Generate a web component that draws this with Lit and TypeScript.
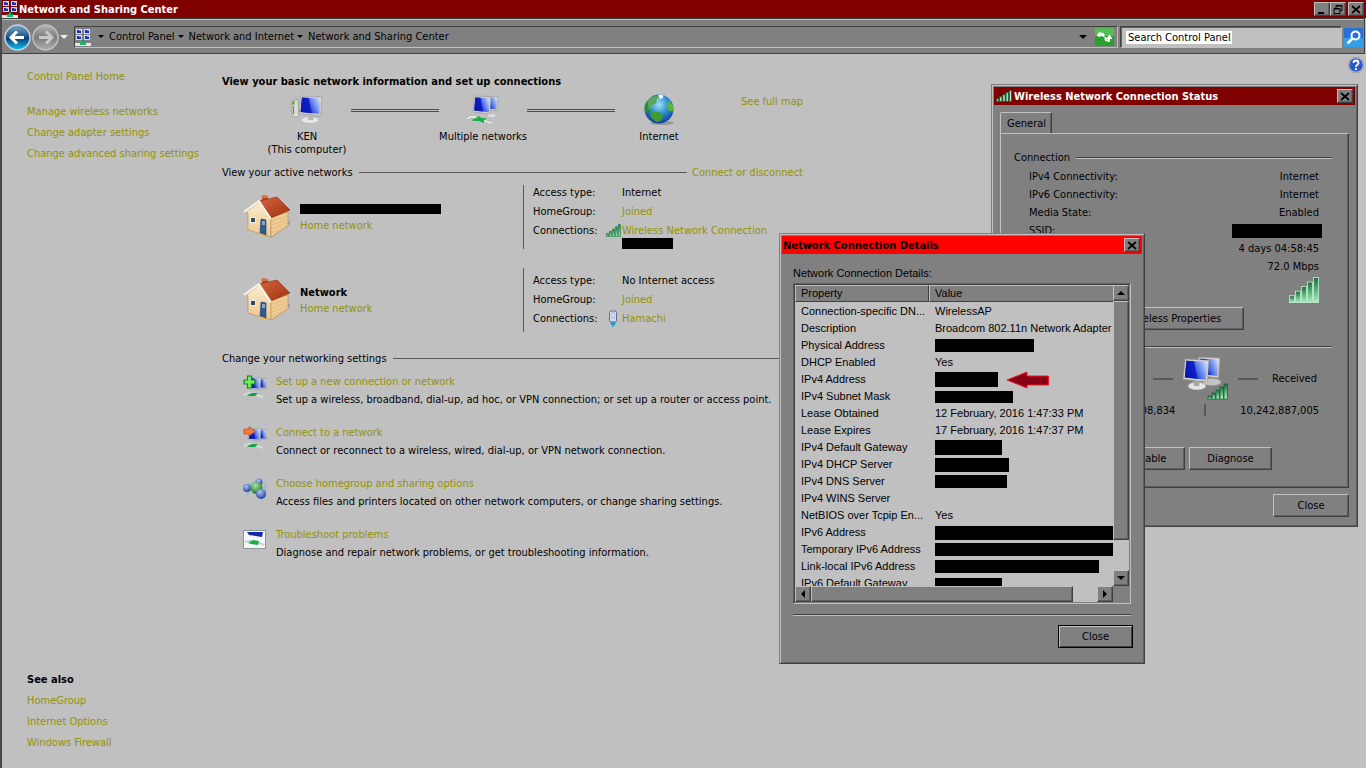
import { LitElement, html, svg, css, nothing } from "lit";
import { customElement } from "lit/decorators.js";

/* ---------- icon artwork ---------- */

const screen = (x: number, y: number, w: number, h: number) => svg`
  <path d="M${x + w * 0.08} ${y}L${x + w} ${y + h * 0.05}L${x + w * 0.94} ${y + h}L${x} ${y + h * 0.88}Z" fill="#d4d2cc" stroke="#8d8d8d" stroke-width=".5"/>
  <path d="M${x + w * 0.13} ${y + h * 0.08}L${x + w * 0.93} ${y + h * 0.12}L${x + w * 0.88} ${y + h * 0.9}L${x + w * 0.07} ${y + h * 0.8}Z" fill="url(#scr)"/>
  <path d="M${x + w * 0.13} ${y + h * 0.08}L${x + w * 0.42} ${y + h * 0.1}L${x + w * 0.56} ${y + h * 0.86}L${x + w * 0.07} ${y + h * 0.8}Z" fill="#0a16b8" opacity=".85"/>`;

const defs = svg`
  <defs>
    <linearGradient id="scr" x1="0" x2="1" y1="0.6" y2="0.2">
      <stop offset="0" stop-color="#0614a8"/><stop offset=".4" stop-color="#2c50e0"/><stop offset="1" stop-color="#c8dcff"/>
    </linearGradient>
    <linearGradient id="bar" x1="0" x2="0" y1="0" y2="1">
      <stop offset="0" stop-color="#18703c"/><stop offset="1" stop-color="#aaf0c0"/>
    </linearGradient>
    <linearGradient id="roof" x1="0" x2="1" y1="0" y2="1">
      <stop offset="0" stop-color="#d4663c"/><stop offset="1" stop-color="#a03010"/>
    </linearGradient>
    <linearGradient id="wall" x1="0" x2="0" y1="0" y2="1">
      <stop offset="0" stop-color="#fbeed2"/><stop offset="1" stop-color="#ecc58c"/>
    </linearGradient>
    <radialGradient id="sea" cx=".5" cy=".35" r=".65">
      <stop offset="0" stop-color="#9fe0f8"/><stop offset=".5" stop-color="#2f8fd0"/><stop offset="1" stop-color="#123c9c"/>
    </radialGradient>
    <radialGradient id="blue" cx=".4" cy=".3" r=".7">
      <stop offset="0" stop-color="#b4c8ff"/><stop offset="1" stop-color="#20409c"/>
    </radialGradient>
    <radialGradient id="green" cx=".4" cy=".3" r=".7">
      <stop offset="0" stop-color="#a8e4a0"/><stop offset="1" stop-color="#1c7428"/>
    </radialGradient>
    <linearGradient id="navOn" x1="0" x2="0" y1="0" y2="1">
      <stop offset="0" stop-color="#7fa6c4"/><stop offset=".48" stop-color="#1c5688"/><stop offset=".52" stop-color="#0a3c70"/><stop offset="1" stop-color="#10c8f8"/>
    </linearGradient>
    <linearGradient id="navOff" x1="0" x2="0" y1="0" y2="1">
      <stop offset="0" stop-color="#b4b4b4"/><stop offset=".5" stop-color="#7c7c7c"/><stop offset="1" stop-color="#b0b0b0"/>
    </linearGradient>
  </defs>`;

const icon = (w: number, h: number, body: unknown) =>
  html`<svg class="icon" width=${w} height=${h} viewBox="0 0 ${w} ${h}" aria-hidden="true">${defs}${body}</svg>`;

const cable = svg`
  <path d="M1 24Q5 20 11 23T26 28" fill="none" stroke="#8ca49c" stroke-width="3.6"/>
  <path d="M1 24Q5 20 11 23T26 28" fill="none" stroke="#dce6e2" stroke-width="2.4"/>
  <path d="M6 25L12 22L13 21L15 23L21 23L18 25L18 28L13 26L7 26Z" fill="#18b048"/>`;

const computerIcon = icon(34, 30, svg`
  <path d="M2 6L8 4L9 22L4 22L2 20Z" fill="#d8d8d4" stroke="#8c8c8c" stroke-width=".6"/><path d="M3.500 6.500V9.500" stroke="#28b020" stroke-width="2"/>
  <path d="M3.500 11V19" stroke="#777"/>
  <ellipse cx="20" cy="25" rx="9" ry="3.500" fill="#e6e6e6" stroke="#aaa" stroke-width=".6"/><path d="M18 19H24L23 25H18Z" fill="#b8b8b8"/>
  ${screen(9, 1, 23, 20)}`);

const networkIcon = icon(34, 30, svg`
  <path d="M22 20L29 21" stroke="#ddd" stroke-width="3"/>
  ${screen(17, 1, 15, 15)}${screen(7, 1, 18, 18)}
  ${cable}`);

const globeIcon = icon(34, 32, svg`
  <ellipse cx="20" cy="29" rx="12" ry="2" fill="#777" opacity=".55"/>
  <circle cx="17" cy="15" r="14.500" fill="url(#sea)"/>
  <path d="M4 9Q8 2 15 1L19 3L15 5L14 9L9 12L8 17L4 19Q1 14 4 9Z" fill="#2f8c34"/>
  <path d="M10 18Q16 16 21 21L19 27L14 28Q9 24 8 21Z" fill="#3c9c30"/>
  <path d="M27 6L31 12L31 17L27 17L25 12Z" fill="#58b83c"/>
  <path d="M16 1H21V4L18 5Z" fill="#e8f4ff"/>
  <path d="M5 5Q13 1 23 2Q14 7 7 16Z" fill="#fff" opacity=".22"/>`);

const houseIcon = icon(48, 48, svg`
  <path d="M28 45L46 32L47 28L40 30Z" fill="#777" opacity=".5"/>
  <path d="M19 4L21 3H25V10H19Z" fill="#b04c24"/><path d="M18 3L21 2L25 3L24 5H19Z" fill="#d87040"/>
  <path d="M3 19L16 9L28 25V44L5 37V20Z" fill="url(#wall)" stroke="#b48c58" stroke-width=".6"/>
  <path d="M28 24L45 19V33L28 44Z" fill="#f0cc94" stroke="#b48c58" stroke-width=".6"/>
  <path d="M29 28L45 23M29 32L45 26M29 36L45 29M29 40L45 32" stroke="#d8b078" stroke-width=".7"/>
  <path d="M16 8L34 4L47 17L28 25Z" fill="url(#roof)" stroke="#8c2c10" stroke-width=".6"/>
  <path d="M1 19L16 8L28 26" fill="none" stroke="#fff8ec" stroke-width="1.800"/>
  <path d="M7 24H13V30H7Z" fill="#e8eef4"/><path d="M8 25H12V29H8Z" fill="#384858"/>
  <path d="M18 26L23 27V42L17 40Z" fill="#2c5c98" stroke="#1c3c68" stroke-width=".6"/><path d="M19 28H22V32H19Z" fill="#88a8c8"/>
  <path d="M16 40L22 42L21 44L16 42Z" fill="#e4c048"/>`);

const signal = (w: number, h: number, bars = 5, fill = "url(#bar)") => icon(w, h, svg`
  ${Array.from({ length: bars }, (_, i) => {
    const step = w / bars;
    const top = h * 0.7 * (1 - i / (bars - 1));
    return svg`<rect x=${i * step + 0.5} y=${top + 0.5} width=${step - 1} height=${h - top - 1}
      fill=${fill} stroke=${fill !== "url(#bar)" ? "#185c34" : w > 20 ? "#c4f4d4" : "#3c8c5c"} stroke-width=".8"/>`;
  })}`);

const plugIcon = icon(10, 17, svg`
  <rect x="1.500" y="1" width="7" height="11" rx="1.500" fill="#d4dcec" stroke="#5c6c90"/><rect x="4" y="3" width="2" height="5" fill="#fff" stroke="#7c8cb0" stroke-width=".6"/>
  <path d="M3.500 12V15M6.500 12V15M5 12V17" stroke="#1890c8" stroke-width="1.300"/>`);

const smallNet = svg`${screen(14, 3, 10, 11)}${screen(5, 2, 13, 13)}
  <path d="M1 20Q6 17 11 19T20 22" fill="none" stroke="#d4dcdc" stroke-width="2"/><path d="M4 20L9 18L15 18L12 21L6 21Z" fill="#18a044"/>`;
const addIcon = icon(24, 26, svg`${smallNet}<path d="M4.500 1H8.500V5H12V9H8.500V13H4.500V9H1V5H4.500Z" fill="#7ce860" stroke="#108c18" stroke-width="1.200"/>`);
const joinIcon = icon(24, 26, svg`${smallNet}<path d="M1 3H6V.5L12 5.500L6 10V8H1Z" fill="#f47c38" stroke="#c85418" stroke-width=".8"/>`);
const groupIcon = icon(24, 26, svg`
  <path d="M5 18Q1 8 12 5M21 6Q25 12 19 18" stroke="#88b4d8" stroke-width="2" fill="none" opacity=".7"/>
  <circle cx="16" cy="5" r="3.500" fill="url(#blue)"/><circle cx="4" cy="11" r="4" fill="url(#blue)"/>
  <circle cx="13.500" cy="11" r="6" fill="url(#green)"/><circle cx="18" cy="17" r="5" fill="url(#blue)"/>`);
const troubleIcon = icon(24, 26, svg`
  <rect x=".5" y="2.500" width="22" height="18" fill="#f4f6f8" stroke="#8c949c"/><path d="M4 4H20L19 9L6 7Z" fill="#1428a8"/>
  <path d="M15 3.500H22" stroke="#fff" stroke-dasharray="1 1"/>
  <path d="M2 14Q9 11 21 17" stroke="#c8d4d0" stroke-width="2" fill="none"/><path d="M5 15L10 12L16 13L15 17L8 16Z" fill="#18b048"/>`);

const centerIcon = icon(17, 17, svg`
  ${[[1, 0], [9, 0], [1, 6], [9, 6]].map(([x, y]) => svg`
    <rect x=${x} y=${y} width="6" height="5" fill="#d4dcf0"/><rect x=${x + 1} y=${y + 1} width="4" height="3" fill="#1430b8"/><rect x=${x + 3} y=${y + 1} width="2" height="1" fill="#7ca0f0"/>`)}
  <path d="M8 11V15" stroke="#18a048" stroke-width="2"/><rect x="0" y="14" width="16" height="3" fill="#e0e8e8"/><rect x="5" y="13" width="6" height="3" fill="#20b070"/>`);

const linkedPcIcon = icon(48, 46, svg`
  <ellipse cx="30" cy="26" rx="9" ry="3.500" fill="#c4c4c4"/><ellipse cx="15" cy="30" rx="9" ry="4" fill="#e4e4e4" stroke="#999" stroke-width=".6"/>
  <path d="M11 24H18L17 30H12Z" fill="#a8a8a8"/>
  ${screen(15, 1, 23, 21)}${screen(1, 3, 26, 23)}
  ${[0, 1, 2, 3, 4].map((i) => svg`<rect x=${26 + i * 4} y=${40 - i * 3} width="3.500" height=${3 + i * 3} fill="url(#bar)" stroke="#185c34" stroke-width=".7"/>`)}`);

const navIcon = (on: boolean) => icon(27, 27, svg`
  <circle cx="13.500" cy="13.500" r="12.500" fill=${on ? "url(#navOn)" : "url(#navOff)"} stroke=${on ? "#c4d4e0" : "#c0c0c0"} stroke-width="1.500"/>
  <path d=${on ? "M20 13.500H8M13 7.500L7 13.500L13 19.500" : "M7 13.500H19M14 7.500L20 13.500L14 19.500"} fill="none" stroke=${on ? "#fff" : "#c8c8c8"} stroke-width="3"/>`);

const refreshIcon = icon(19, 18, svg`
  <rect width="19" height="18" rx="1" fill="#28a030"/><rect width="19" height="8" fill="#68c868" opacity=".7"/>
  <path d="M8.500 9V7Q8.500 5.500 6 5.500M10.500 9V11Q10.500 12.500 13 12.500" fill="none" stroke="#fff" stroke-width="2"/>
  <path d="M2 8.500L5.500 3L9 8.500ZM10 9.500L13.500 15L17 9.500Z" fill="#fff" opacity="0"/>
  <path d="M1.500 8L4.500 3.500L8 8Z" fill="#fff"/><path d="M4.500 6V9" stroke="#fff" stroke-width="2"/>
  <path d="M11 11L14.500 6.500L17.500 11Z" fill="#fff"/><path d="M14 10V14" stroke="#fff" stroke-width="2"/>`);
const searchIcon = icon(19, 19, svg`
  <rect width="19" height="19" rx="1" fill="#2870d8"/><rect y="10" width="19" height="9" fill="#38b4f0" opacity=".7"/>
  <circle cx="11.500" cy="7.500" r="4" fill="none" stroke="#fff" stroke-width="2"/><path d="M8.500 10.500L3.500 15.500" stroke="#fff" stroke-width="2.500"/>`);
const helpIcon = icon(16, 16, svg`
  <circle cx="8" cy="8" r="7.300" fill="#2c58c8" stroke="#e0e4ec" stroke-width="1"/><circle cx="8" cy="8" r="7.800" fill="none" stroke="#666" stroke-width=".5"/>
  <path d="M5.500 6Q5.500 3.500 8 3.500T10.500 6Q10.500 7 9 8Q8 8.500 8 10" fill="none" stroke="#fff" stroke-width="1.800"/><circle cx="8" cy="12.200" r="1.100" fill="#fff"/>`);

const closeGlyph = icon(10, 9, svg`<path d="M1 1L9 8M9 1L1 8" stroke="#000" stroke-width="1.700"/>`);
const minGlyph = icon(10, 9, svg`<rect x="1" y="7" width="6" height="2"/>`);
const restoreGlyph = icon(10, 9, svg`<path d="M3 3V.5H9V5.500H7M3 1H9" fill="none" stroke="#000"/><path d="M1 3.500H7V8.500H1ZM1 4H7" fill="none" stroke="#000"/>`);
const arrow = (d: string) => icon(8, 8, svg`<path d=${d}/>`);
const UP = "M0 6L4 2L8 6Z", DOWN = "M0 2L4 6L8 2Z", LEFT = "M6 0L2 4L6 8Z", RIGHT = "M2 0L6 4L2 8Z";

/* ---------- shared look ---------- */

const base = css`
  * { box-sizing: border-box; }
  .icon { display: block; flex: none; }
  a { color: #949200; text-decoration: none; }
  p, h1, h2, h3, ul, dl, dd, dt { margin: 0; padding: 0; }
  ul { list-style: none; }
  button {
    font: inherit; color: #000; background: #808080; padding: 0;
    border: 1px solid; border-color: #c0c0c0 #404040 #404040 #c0c0c0;
    box-shadow: inset -1px -1px #606060;
    display: flex; align-items: center; justify-content: center;
  }
  .titlebar {
    display: flex; align-items: center; height: 18px;
    color: #fff; background: #800000; font-weight: 700; gap: 2px;
  }
  .titlebar h1, .titlebar h2 { font-size: 11px; line-height: 13px; flex: 1; }
  .tool { width: 16px; height: 14px; }
  .push { height: 23px; }
  .frame {
    background: #808080; border: 1px solid; border-color: #808080 #404040 #404040 #808080;
    box-shadow: inset 1px 1px #c0c0c0, inset -1px -1px #606060;
    padding: 2px;
  }
  .groove { height: 2px; border-top: 1px solid #404040; border-bottom: 1px solid #c0c0c0; }
  .mask { display: block; background: #000; }
`;

/* ---------- status window ---------- */

@customElement("status-window")
class StatusWindow extends LitElement {
  static styles = [base, css`
    :host { display: block; }
    .titlebar { padding: 0 2px; }
    .body { padding: 7px 6px 7px 6px; }
    .tab {
      width: 52px; height: 21px; padding: 4px 6px; line-height: 13px;
      border: 1px solid; border-color: #c0c0c0 #404040 transparent #c0c0c0; border-bottom: 0;
      border-radius: 2px 2px 0 0; box-shadow: inset -1px 0 #606060;
    }
    .panel {
      height: 355px; padding: 17px 16px 0 13px;
      border: 1px solid; border-color: #c0c0c0 #404040 #404040 #c0c0c0;
      box-shadow: inset -1px -1px #606060;
    }
    .legend { display: flex; align-items: center; gap: 6px; line-height: 13px; }
    .legend .groove { flex: 1; }
    .facts { padding: 4px 13px 0 15px; line-height: 18px; }
    .facts div { display: flex; justify-content: space-between; align-items: center; height: 18px; }
    .facts .mask { width: 90px; height: 14px; margin-right: -3px; }
    .facts .tall { height: 27px; }
    .row { display: flex; gap: 4px; }
    .links { padding: 4px 88px 0 0; justify-content: flex-end; }
    .links .push { width: 140px; }
    .activity { padding-top: 10px; }
    .traffic {
      display: grid; grid-template-columns: 1fr 20px 65px 20px 59px;
      align-items: center; justify-items: center; height: 51px; padding-right: 15px;
    }
    .dash { width: 20px; height: 2px; background: #585858; }
    .traffic .sent { justify-self: end; padding-right: 8px; }
    .traffic .got { justify-self: end; }
    .bytes { display: flex; padding: 0 13px 0 15px; line-height: 13px; height: 16px; align-items: flex-start; }
    .bytes dt { flex: 1; }
    .bytes .mid { width: 2px; height: 12px; margin: 0 34px 0 29px; background: #585858; }
    .actions { padding-top: 27px; }
    .actions .push { width: 83px; }
    .actions .wide { width: 93px; }
    .actions .slim { width: 74px; }
    .foot { display: flex; justify-content: flex-end; padding: 6px 0 0; }
    .foot .push { width: 76px; }
  `];
  render() {
    return html`
      <section class="frame" aria-label="Wireless Network Connection Status">
        <header class="titlebar">
          ${signal(16, 12, 5, "#a8f4c8")}
          <h2>Wireless Network Connection Status</h2>
          <button class="tool" aria-label="Close">${closeGlyph}</button>
        </header>
        <div class="body">
          <div class="tab" role="tab">General</div>
          <div class="panel">
            <div class="legend">Connection<span class="groove"></span></div>
            <dl class="facts">
              <div><dt>IPv4 Connectivity:</dt><dd>Internet</dd></div>
              <div><dt>IPv6 Connectivity:</dt><dd>Internet</dd></div>
              <div><dt>Media State:</dt><dd>Enabled</dd></div>
              <div><dt>SSID:</dt><dd class="mask"></dd></div>
              <div><dt>Duration:</dt><dd>4 days 04:58:45</dd></div>
              <div><dt>Speed:</dt><dd>72.0 Mbps</dd></div>
              <div class="tall"><dt>Signal Quality:</dt><dd>${signal(30, 26)}</dd></div>
            </dl>
            <div class="row links"><button class="push">Wireless Properties</button></div>
            <div class="activity">
              <div class="legend">Activity<span class="groove"></span></div>
              <div class="traffic">
                <span class="sent">Sent</span><span class="dash"></span>${linkedPcIcon}<span class="dash"></span><span class="got">Received</span>
              </div>
              <dl class="bytes"><dt>Bytes:</dt><dd>08,834</dd><dd class="mid"></dd><dd>10,242,887,005</dd></dl>
              <div class="row actions">
                <button class="push wide">Properties</button><button class="push slim">Disable</button><button class="push">Diagnose</button>
              </div>
            </div>
          </div>
          <div class="foot"><button class="push">Close</button></div>
        </div>
      </section>`;
  }
}

/* ---------- details window ---------- */

type Row = { name: string; value?: string; mask?: [number, number]; marked?: boolean };
const rows: Row[] = [
  { name: "Connection-specific DN...", value: "WirelessAP" },
  { name: "Description", value: "Broadcom 802.11n Network Adapter" },
  { name: "Physical Address", mask: [99, 13] },
  { name: "DHCP Enabled", value: "Yes" },
  { name: "IPv4 Address", mask: [63, 15], marked: true },
  { name: "IPv4 Subnet Mask", mask: [78, 12] },
  { name: "Lease Obtained", value: "12 February, 2016 1:47:33 PM" },
  { name: "Lease Expires", value: "17 February, 2016 1:47:37 PM" },
  { name: "IPv4 Default Gateway", mask: [67, 15] },
  { name: "IPv4 DHCP Server", mask: [74, 14] },
  { name: "IPv4 DNS Server", mask: [72, 13] },
  { name: "IPv4 WINS Server" },
  { name: "NetBIOS over Tcpip En...", value: "Yes" },
  { name: "IPv6 Address", mask: [179, 14] },
  { name: "Temporary IPv6 Address", mask: [179, 13] },
  { name: "Link-local IPv6 Address", mask: [164, 13] },
  { name: "IPv6 Default Gateway", mask: [67, 11] },
];

@customElement("details-window")
class DetailsWindow extends LitElement {
  static styles = [base, css`
    :host { display: block; }
    .titlebar { background: #f00; color: #000; padding: 0 2px 0 1px; }
    .body { padding: 12px 11px 13px 11px; font-family: "Liberation Sans", Arial, sans-serif; }
    .caption { line-height: 14px; padding-bottom: 3px; }
    .list {
      display: grid; grid-template-columns: 1fr 16px; grid-template-rows: 301px 16px;
      border: 1px solid; border-color: #606060 #c0c0c0 #c0c0c0 #606060;
      box-shadow: inset 1px 1px #404040; padding: 1px;
    }
    .view { overflow: hidden; background: #c0c0c0; }
    table { width: 100%; table-layout: fixed; border-collapse: separate; border-spacing: 0; line-height: 17px; }
    th {
      height: 17px; padding: 0 5px; text-align: left; font-weight: 400; background: #808080; line-height: 15px;
      border: 1px solid; border-color: #c0c0c0 #404040 #404040 #c0c0c0;
    }
    th + th { border-right: 0; }
    .name { width: 134px; }
    td { height: 17px; padding: 0 0 0 6px; white-space: nowrap; }
    .cell { display: flex; align-items: center; gap: 8px; height: 17px; }
    tbody::before { content: ""; display: table-row; height: 1px; }
    .vbar, .hbar { display: flex; background: #c0c0c0; }
    .vbar { flex-direction: column; justify-content: space-between; }
    .bar-button { width: 16px; height: 16px; flex: none; }
    .thumb {
      background: #808080; border: 1px solid; border-color: #c0c0c0 #404040 #404040 #c0c0c0;
      box-shadow: inset -1px -1px #606060;
    }
    .vbar .thumb { flex: 0 1 239px; }
    .hbar .thumb { flex: 0 1 262px; }
    .gap { flex: 1; }
    .rule { margin-top: 10px; }
    .foot { display: flex; justify-content: flex-end; padding-top: 9px; margin-right: -2px; }
    .foot .push {
      width: 75px; border-color: #000; box-shadow: inset 1px 1px #c0c0c0, inset -1px -1px #404040;
      font-family: "DejaVu Sans Condensed", Tahoma, sans-serif;
    }
  `];
  render() {
    return html`
      <section class="frame" aria-label="Network Connection Details">
        <header class="titlebar">
          <h2>Network Connection Details</h2>
          <button class="tool" aria-label="Close">${closeGlyph}</button>
        </header>
        <div class="body">
          <p class="caption">Network Connection Details:</p>
          <div class="list">
            <div class="view">
              <table>
                <thead><tr><th class="name" scope="col">Property</th><th scope="col">Value</th></tr></thead>
                <tbody>
                  ${rows.map((r) => html`<tr>
                    <td>${r.name}</td>
                    <td><div class="cell">${r.value ?? nothing}
                      ${r.mask ? html`<span class="mask" style="width:${r.mask[0]}px;height:${r.mask[1]}px"></span>` : nothing}
                      ${r.marked ? icon(44, 18, svg`<path d="M1 9L21 1V5H42.500V14H21V17Z" fill="#880015" stroke="#ed1c24"/>`) : nothing}
                    </div></td></tr>`)}
                </tbody>
              </table>
            </div>
            <div class="vbar">
              <button class="bar-button" aria-label="Scroll up">${arrow(UP)}</button>
              <div class="thumb"></div><div class="gap"></div>
              <button class="bar-button" aria-label="Scroll down">${arrow(DOWN)}</button>
            </div>
            <div class="hbar">
              <button class="bar-button" aria-label="Scroll left">${arrow(LEFT)}</button>
              <div class="thumb"></div><div class="gap"></div>
              <button class="bar-button" aria-label="Scroll right">${arrow(RIGHT)}</button>
            </div>
          </div>
          <div class="groove rule"></div>
          <div class="foot"><button class="push">Close</button></div>
        </div>
      </section>`;
  }
}

/* ---------- main window ---------- */

const tasks = [
  [addIcon, "Set up a new connection or network", "Set up a wireless, broadband, dial-up, ad hoc, or VPN connection; or set up a router or access point."],
  [joinIcon, "Connect to a network", "Connect or reconnect to a wireless, wired, dial-up, or VPN network connection."],
  [groupIcon, "Choose homegroup and sharing options", "Access files and printers located on other network computers, or change sharing settings."],
  [troubleIcon, "Troubleshoot problems", "Diagnose and repair network problems, or get troubleshooting information."],
] as const;

@customElement("app-root")
class AppRoot extends LitElement {
  static styles = [base, css`
    :host {
      display: flex; flex-direction: column; position: relative; min-height: 100vh; overflow: hidden;
      background: #c0c0c0; color: #000; border-left: 2px solid #484848;
      font: 11px/13px "DejaVu Sans Condensed", Tahoma, Verdana, sans-serif;
    }
    .titlebar.app { padding: 0 2px 0 0; gap: 0; }
    .tools { display: flex; }
    .tools .last { margin-left: 2px; }
    .nav {
      display: flex; align-items: center; height: 36px; padding: 2px 1px 0 2px; margin-right: 1px;
      background: #808080; border: 1px solid #404040; border-left: 0;
      box-shadow: inset 0 1px #c0c0c0;
    }
    .nav .round { border: 0; background: none; box-shadow: none; margin-right: 1px; }
    .address {
      flex: 1; display: flex; align-items: center; height: 22px; margin-left: 6px; padding-right: 3px;
      border: 1px solid; border-color: #404040 #c0c0c0 #c0c0c0 #404040;
    }
    .crumbs { display: flex; flex: 1; padding: 0 0 2px 6px; }
    .crumbs li { display: flex; align-items: center; }
    .crumbs a { color: #000; padding: 0 3px 0 5px; }
    .plain { border: 0; background: none; box-shadow: none; }
    .chev { width: 24px; }
    .search {
      display: flex; align-items: center; width: 222px; height: 22px; margin: 0 2px 0 2px; padding-left: 5px;
      background: #c0c0c0; border: 1px solid; border-color: #404040 #c0c0c0 #c0c0c0 #404040; box-shadow: inset 1px 1px #606060;
    }
    .search input { width: 106px; height: 13px; border: 0; padding: 0 0 0 2px; background: #fff; color: #000; font: inherit; }
    .content { flex: 1; display: flex; align-items: stretch; position: relative; }
    .side { flex: 0 0 220px; padding: 16px 0 19px 25px; display: flex; flex-direction: column; }
    .side ul { display: flex; flex-direction: column; gap: 8px; }
    .side .tasks { margin-top: 22px; flex: 1; }
    .side h3 { font-size: 11px; padding-bottom: 8px; }
    main { flex: 0 1 581px; padding-top: 21px; }
    h2 { font-size: 11px; }
    .map { display: flex; padding: 6px 0 0 41px; height: 71px; align-items: flex-start; }
    .node { width: 88px; display: flex; flex-direction: column; align-items: center; text-align: center; }
    .node .icon { height: 32px; margin-bottom: 4px; }
    .node span { white-space: nowrap; }
    .wire { width: 88px; height: 3px; margin-top: 15px; border: solid #f00; border-width: 1px 0; }
    .map > a { margin: 1px 0 0 auto; }
    .heading { display: flex; align-items: center; gap: 6px; margin-top: 7px; }
    .heading i { flex: 1; height: 1px; background: #585858; }
    .heading a { margin-left: -1px; }
    .network { display: flex; height: 64px; margin: 6px 0 19px 21px; }
    .network + .network { margin: 0 0 20px 21px; }
    .who { width: 281px; display: flex; gap: 9px; align-items: center; border-right: 1px solid #585858; }
    .who div { display: flex; flex-direction: column; gap: 3px; }
    .who .mask { width: 141px; height: 10px; margin-top: 2px; margin-bottom: 2px; }
    .info {
      padding-left: 9px; margin-top: -2px; line-height: 19px; column-gap: 1px;
      display: grid; grid-template-columns: 71px 16px auto; align-content: start;
    }
    .network + .network .info { margin-top: 3px; }
    .info .wide { grid-column: 2 / 4; padding-left: 17px; }
    .info dd { display: flex; align-items: center; }
    .info .under { grid-column: 3; height: 11px; width: 51px; margin-top: -2px; }
    .info dd.ico { justify-content: center; }
    .jobs { display: flex; flex-direction: column; gap: 20px; padding: 10px 0 0 21px; }
    .jobs li { display: flex; gap: 9px; height: 31px; align-items: flex-start; }
    .jobs div { display: flex; flex-direction: column; gap: 5px; white-space: nowrap; }
    .help { position: absolute; right: 2px; top: 3px; }
    status-window { position: absolute; left: 989px; top: 84px; width: 367px; }
    details-window { position: absolute; left: 777px; top: 233px; width: 366px; }
  `];
  private network(name: unknown, access: string, ico: unknown, link: string, extra: unknown = nothing) {
    return html`
      <div class="network">
        <div class="who">${houseIcon}<div>${name}<a href="#">Home network</a></div></div>
        <dl class="info">
          <dt>Access type:</dt><dd class="wide">${access}</dd>
          <dt>HomeGroup:</dt><dd class="wide"><a href="#">Joined</a></dd>
          <dt>Connections:</dt><dd class="ico">${ico}</dd><dd><a href="#">${link}</a></dd>
          ${extra}
        </dl>
      </div>`;
  }
  render() {
    return html`
      <header class="titlebar app">
        ${centerIcon}
        <h1>Network and Sharing Center</h1>
        <div class="tools">
          <button class="tool" aria-label="Minimize">${minGlyph}</button>
          <button class="tool" aria-label="Restore">${restoreGlyph}</button>
          <button class="tool last" aria-label="Close">${closeGlyph}</button>
        </div>
      </header>
      <nav class="nav" aria-label="Address">
        <button class="round" aria-label="Back">${navIcon(true)}</button>
        <button class="round" aria-label="Forward">${navIcon(false)}</button>
        <button class="plain" aria-label="Recent pages">${icon(8, 8, svg`<path d="M0 2L4 6L8 2Z" fill="#eee"/>`)}</button>
        <div class="address">
          ${centerIcon}
          <ul class="crumbs">
            ${["Control Panel", "Network and Internet", "Network and Sharing Center"].map((t) => html`
              <li>${icon(6, 6, svg`<path d="M0 2L3 5L6 2Z"/>`)}<a href="#">${t}</a></li>`)}
          </ul>
          <button class="plain chev" aria-label="Address history">${icon(8, 8, svg`<path d="M0 2L4 6L8 2Z"/>`)}</button>
          <button class="plain" aria-label="Refresh">${refreshIcon}</button>
        </div>
        <label class="search"><input type="text" aria-label="Search Control Panel" value="Search Control Panel"></label>
        <button class="plain" aria-label="Search">${searchIcon}</button>
      </nav>
      <div class="content">
        <aside class="side">
          <a href="#">Control Panel Home</a>
          <ul class="tasks">
            <li><a href="#">Manage wireless networks</a></li>
            <li><a href="#">Change adapter settings</a></li>
            <li><a href="#">Change advanced sharing settings</a></li>
          </ul>
          <h3>See also</h3>
          <ul>
            <li><a href="#">HomeGroup</a></li>
            <li><a href="#">Internet Options</a></li>
            <li><a href="#">Windows Firewall</a></li>
          </ul>
        </aside>
        <main>
          <h2>View your basic network information and set up connections</h2>
          <div class="map">
            <div class="node">${computerIcon}<span>KEN</span><span>(This computer)</span></div>
            <div class="wire"></div>
            <div class="node">${networkIcon}<span>Multiple networks</span></div>
            <div class="wire"></div>
            <div class="node">${globeIcon}<span>Internet</span></div>
            <a href="#">See full map</a>
          </div>
          <div class="heading">View your active networks<i></i><a href="#">Connect or disconnect</a></div>
          ${this.network(html`<span class="mask"></span>`, "Internet", signal(15, 13), "Wireless Network Connection", html`<dd class="mask under"></dd>`)}
          ${this.network(html`<b>Network</b>`, "No Internet access", plugIcon, "Hamachi")}
          <div class="heading">Change your networking settings<i></i></div>
          <ul class="jobs">
            ${tasks.map(([ico, title, text]) => html`<li>${ico}<div><a href="#">${title}</a><p>${text}</p></div></li>`)}
          </ul>
        </main>
        <button class="plain help" aria-label="Help">${helpIcon}</button>
      </div>
      <status-window></status-window>
      <details-window></details-window>`;
  }
}
